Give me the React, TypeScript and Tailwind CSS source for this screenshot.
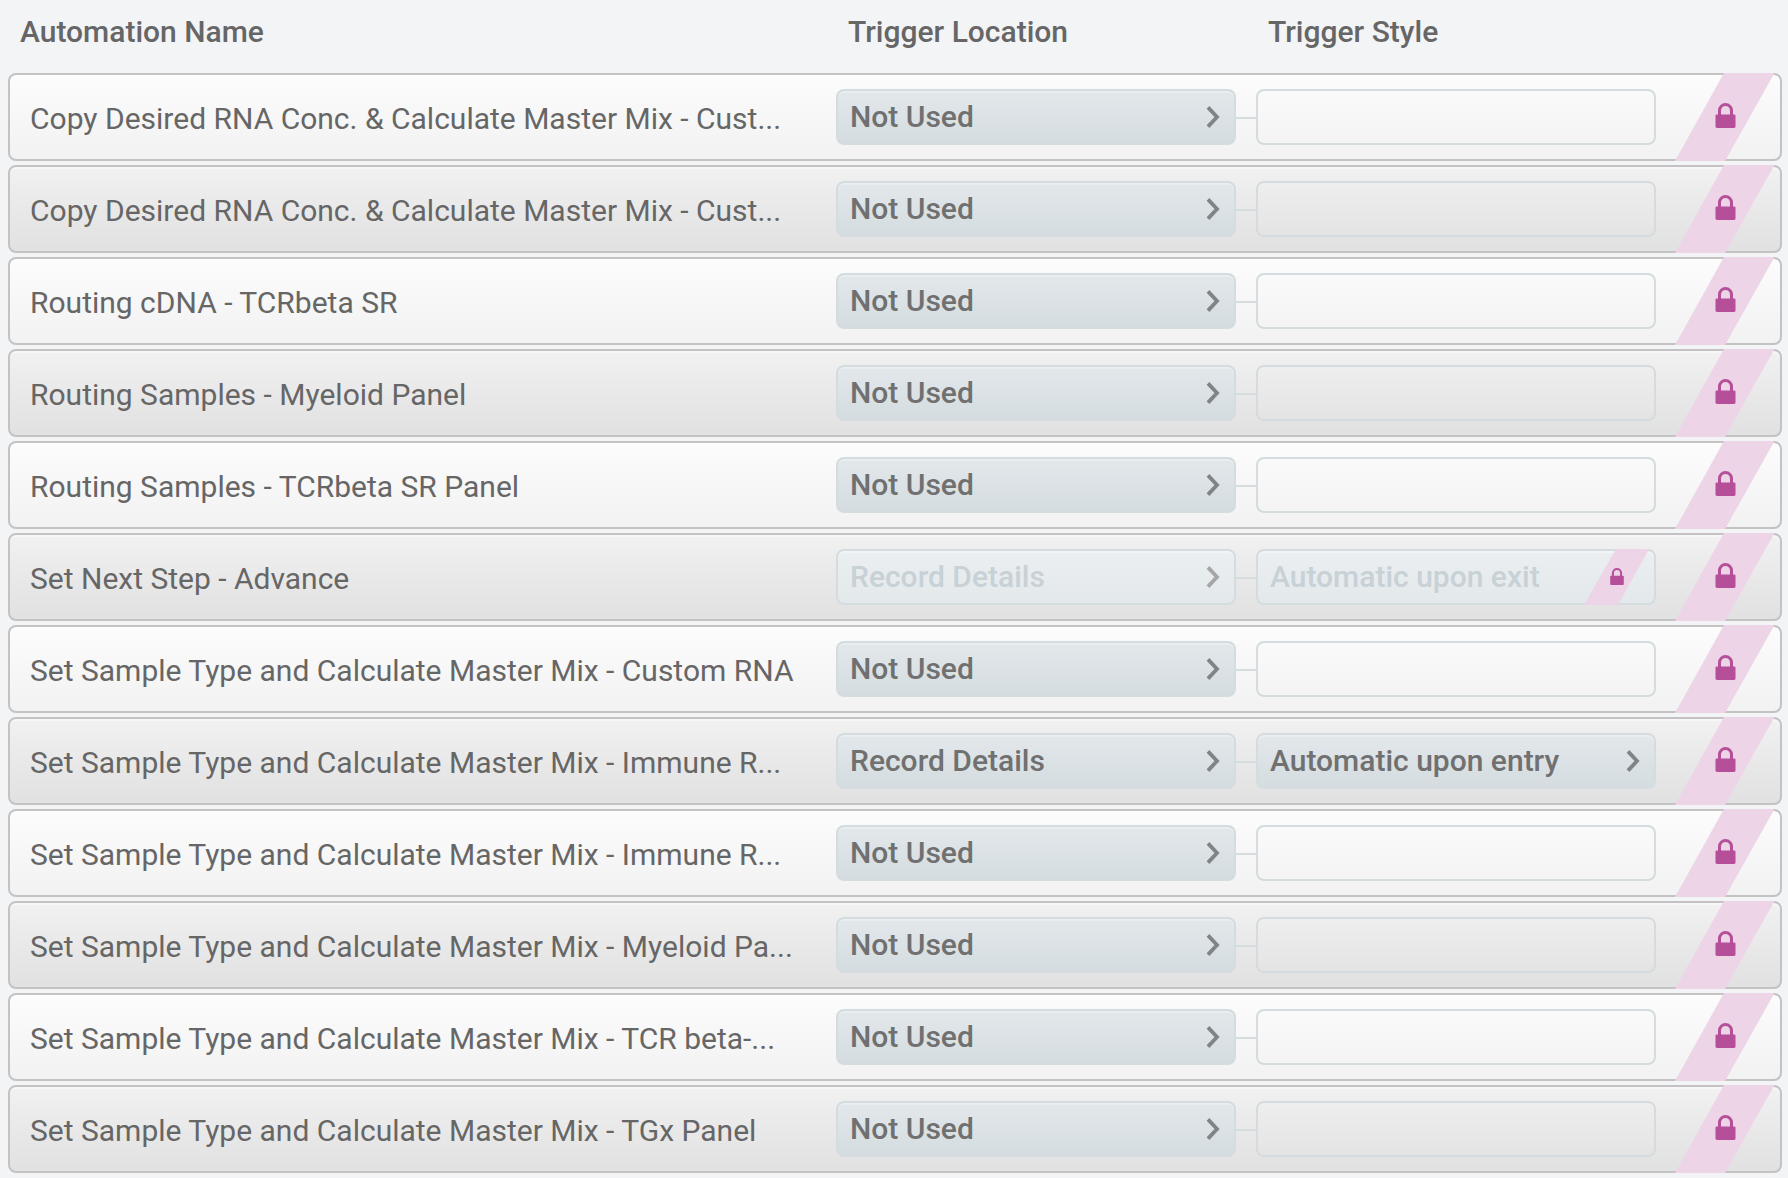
import React from "react";

type Choice = { label: string; disabled?: boolean; locked?: boolean };
type Automation = { name: string; location: Choice; style?: Choice };

const notUsed: Choice = { label: "Not Used" };

const automations: Automation[] = [
  { name: "Copy Desired RNA Conc. & Calculate Master Mix - Cust...", location: notUsed },
  { name: "Copy Desired RNA Conc. & Calculate Master Mix - Cust...", location: notUsed },
  { name: "Routing cDNA - TCRbeta SR", location: notUsed },
  { name: "Routing Samples - Myeloid Panel", location: notUsed },
  { name: "Routing Samples - TCRbeta SR Panel", location: notUsed },
  {
    name: "Set Next Step - Advance",
    location: { label: "Record Details", disabled: true },
    style: { label: "Automatic upon exit", disabled: true, locked: true },
  },
  { name: "Set Sample Type and Calculate Master Mix - Custom RNA", location: notUsed },
  {
    name: "Set Sample Type and Calculate Master Mix - Immune R...",
    location: { label: "Record Details" },
    style: { label: "Automatic upon entry" },
  },
  { name: "Set Sample Type and Calculate Master Mix - Immune R...", location: notUsed },
  { name: "Set Sample Type and Calculate Master Mix - Myeloid Pa...", location: notUsed },
  { name: "Set Sample Type and Calculate Master Mix - TCR beta-...", location: notUsed },
  { name: "Set Sample Type and Calculate Master Mix - TGx Panel", location: notUsed },
];

function Chevron({ faded }: { faded?: boolean }) {
  return (
    <svg
      viewBox="0 0 14 24"
      className={faded ? "h-6 w-3.5 shrink-0 text-[#a6a6a6]" : "h-6 w-3.5 shrink-0 text-[#818486]"}
      aria-hidden="true"
    >
      <path d="M2 2.4 L11 12 L2 21.6" fill="none" stroke="currentColor" strokeWidth="3.8" />
    </svg>
  );
}

function Lock({ className }: { className: string }) {
  return (
    <svg viewBox="0 0 20 25" className={className} role="img" aria-label="Locked">
      <path d="M4 13 V7.4 a6 5.9 0 0 1 12 0 V13" fill="none" stroke="#b54f9a" strokeWidth="3" />
      <rect x="0" y="11.4" width="20" height="13.6" rx="1.4" fill="#b54f9a" />
    </svg>
  );
}

function RowRibbon() {
  return (
    <span className="absolute -inset-y-0.5 right-1 flex w-[101px] items-start justify-center pt-[30px]">
      <svg viewBox="0 0 101 88" preserveAspectRatio="none" className="absolute inset-0 size-full" aria-hidden="true">
        <path d="M49 0 H99.5 L50 88 H0 Z" fill="#edd4e7" />
      </svg>
      <Lock className="relative h-[25px] w-[21px]" />
    </span>
  );
}

function FieldRibbon() {
  return (
    <span className="absolute -inset-y-0.5 right-1 flex w-[66px] items-start justify-center pt-[19px]">
      <svg viewBox="0 0 66 56" preserveAspectRatio="none" className="absolute inset-0 size-full" aria-hidden="true">
        <path d="M32 0 H65 L34 56 H0 Z" fill="#edd4e7" />
      </svg>
      <Lock className="relative h-[17px] w-3.5" />
    </span>
  );
}

function Picker({ choice, title }: { choice?: Choice; title: string }) {
  if (!choice) {
    return (
      <button
        type="button"
        disabled
        aria-label={title}
        className="block h-14 w-full rounded-lg border-2 border-[#d4dcdf]"
      />
    );
  }
  return (
    <button
      type="button"
      disabled={choice.disabled}
      aria-haspopup="listbox"
      className={
        choice.disabled
          ? "relative flex h-14 w-full items-center justify-between rounded-lg border-2 border-[#d4dcdf] bg-linear-to-b from-[#ebeff2] to-[#e3e8eb] bg-origin-border pr-3.5 pl-3 text-[#c7d1d6] shadow-[inset_0_2px_0_#f1f5f7]"
          : "relative flex h-14 w-full items-center justify-between rounded-lg border-2 border-[#d4dcdf] bg-linear-to-b from-[#e3e8eb] to-[#d4dcdf] bg-origin-border pr-3.5 pl-3 text-[#707070] shadow-[inset_0_2px_0_#e9eef1]"
      }
    >
      <span className="text-[30px] leading-[52px] font-medium">{choice.label}</span>
      {choice.locked ? <FieldRibbon /> : <Chevron faded={choice.disabled} />}
    </button>
  );
}

const columns = "grid grid-cols-[minmax(0,1fr)_400px_400px_104px] gap-x-5";

export default function App() {
  return (
    <main className="min-h-screen bg-[#f3f4f6] pr-1.5 pb-1 pl-2 font-[Roboto,sans-serif] text-[30px] text-[#666666]">
      <table className="block w-full">
        <thead className="block">
          <tr className={`${columns} h-[73px] border-x-2 border-transparent pt-3 text-left leading-10`}>
            <th scope="col" className="pl-2.5 font-medium">Automation Name</th>
            <th scope="col" className="pl-3 font-medium">Trigger Location</th>
            <th scope="col" className="pl-3 font-medium">Trigger Style</th>
          </tr>
        </thead>
        <tbody className="flex flex-col gap-1">
          {automations.map((row, i) => (
            <tr
              key={i}
              className={
                i % 2 === 0
                  ? `${columns} relative h-[88px] items-start rounded-lg border-2 border-[#c3c3c3] bg-linear-to-b from-[#fcfcfc] to-[#f2f2f2] pt-3.5`
                  : `${columns} relative h-[88px] items-start rounded-lg border-2 border-[#c3c3c3] bg-linear-to-b from-[#f1f1f1] to-[#e1e1e1] pt-3.5 shadow-[inset_0_2px_0_#f7f7f7]`
              }
            >
              <td className="truncate pl-5 leading-[60px]">{row.name}</td>
              <td>
                <Picker choice={row.location} title="Trigger location" />
              </td>
              <td className="relative">
                <span className="absolute top-7 -left-5 h-0.5 w-5 bg-[#d4dcdf]" />
                <Picker choice={row.style} title="Trigger style" />
              </td>
              <td>
                <RowRibbon />
              </td>
            </tr>
          ))}
        </tbody>
      </table>
    </main>
  );
}
